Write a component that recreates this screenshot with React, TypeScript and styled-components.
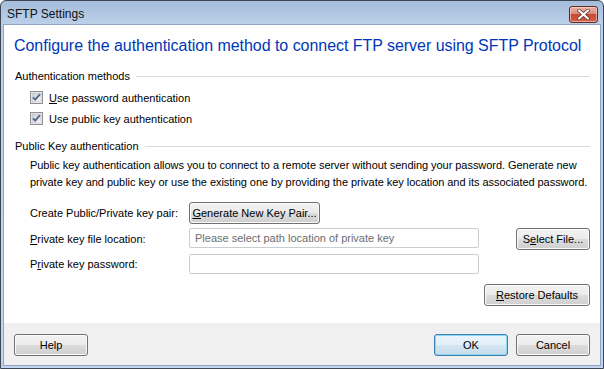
import * as React from "react";
import styled, { createGlobalStyle, css } from "styled-components";

const GlobalStyle = createGlobalStyle`
  html, body {
    margin: 0;
    padding: 0;
    background: #ffffff;
  }
  body {
    font-family: "Liberation Sans", Arial, sans-serif;
    font-size: 11px;
    color: #000000;
  }
`;

const Window = styled.div`
  width: 604px;
  height: 369px;
  box-sizing: border-box;
  display: flex;
  flex-direction: column;
  border: 1px solid #3d4653;
  border-radius: 6px 6px 0 0;
  background: linear-gradient(to bottom, #a4bddb 0px, #bcd0e9 24px, #c4d6ed 100%);
  overflow: hidden;
`;

const TitleBar = styled.div`
  height: 23px;
  flex: 0 0 23px;
  display: flex;
  align-items: center;
  justify-content: space-between;
  padding: 0 5px 0 6px;
`;

const Title = styled.span`
  font-size: 12px;
  color: #111111;
  padding-top: 2px;
`;

const CloseButton = styled.div`
  width: 29px;
  height: 17px;
  box-sizing: border-box;
  margin-top: 4px;
  border: 1px solid #5e2a25;
  border-radius: 3px;
  display: flex;
  align-items: center;
  justify-content: center;
  background: linear-gradient(
    to bottom,
    #eab3a6 0%,
    #db8a7c 45%,
    #c74a33 50%,
    #d0604a 100%
  );
  box-shadow: inset 0 0 0 1px rgba(255, 220, 210, 0.6);
`;

const Client = styled.div`
  flex: 1;
  margin: 0 2px 2px 2px;
  border: 1px solid #8ea5c2;
  background: #ffffff;
  display: flex;
  flex-direction: column;
`;

const Content = styled.div`
  flex: 1;
  padding: 11px 10px 0 10px;
  display: flex;
  flex-direction: column;
`;

const Heading = styled.h1`
  margin: 0;
  font-size: 16px;
  font-weight: normal;
  line-height: 20px;
  letter-spacing: -0.04px;
  color: #0037b8;
  white-space: nowrap;
`;

const GroupHeader = styled.div<{ $top: number }>`
  display: flex;
  align-items: center;
  gap: 6px;
  margin-top: ${(p) => p.$top}px;
  height: 14px;
  padding-left: 1px;
`;

const GroupLabel = styled.span`
  white-space: nowrap;
`;

const Rule = styled.div`
  flex: 1;
  height: 1px;
  background: #d5dbe0;
  margin-top: 1px;
`;

const CheckRow = styled.label`
  display: flex;
  align-items: center;
  gap: 6px;
  height: 21px;
  padding-left: 16px;
`;

const Paragraph = styled.p`
  margin: 4px 0 0 0;
  padding-left: 16px;
  line-height: 17px;
  letter-spacing: -0.045px;
  white-space: nowrap;
`;

const FormGrid = styled.div`
  display: grid;
  grid-template-columns: 159px 290px 1fr;
  grid-template-rows: 22px 22px 20px;
  row-gap: 4px;
  align-items: center;
  margin-top: 11px;
  padding-left: 16px;
`;

const FieldLabel = styled.span`
  white-space: nowrap;
`;

const Input = styled.div<{ $placeholder?: boolean }>`
  height: 20px;
  box-sizing: border-box;
  border: 1px solid #c9ced3;
  border-radius: 2px;
  padding: 0 5px;
  display: flex;
  align-items: center;
  color: ${(p) => (p.$placeholder ? "#6d6d6d" : "#000000")};
  align-self: start;
  white-space: nowrap;
`;

const Button = styled.div<{ $width: number; $default?: boolean }>`
  width: ${(p) => p.$width}px;
  height: 22px;
  box-sizing: border-box;
  border: 1px solid #707070;
  border-radius: 3px;
  display: flex;
  align-items: center;
  justify-content: center;
  white-space: nowrap;
  color: #000000;
  background: linear-gradient(
    to bottom,
    #f2f2f2 0%,
    #ebebeb 50%,
    #dddddd 50%,
    #cfcfcf 100%
  );
  box-shadow: inset 0 0 0 1px #fbfbfb;
  ${(p) =>
    p.$default &&
    css`
      border-color: #3c7fb1;
      box-shadow: inset 0 0 0 1px #8fd5f6;
      background: linear-gradient(
        to bottom,
        #eaf6fd 0%,
        #e3eff7 50%,
        #d3e5f1 50%,
        #c6dbe9 100%
      );
    `}
`;

const SelectCell = styled.div`
  justify-self: end;
  align-self: end;
`;

const ActionRow = styled.div`
  display: flex;
  justify-content: flex-end;
  margin-top: 10px;
`;

const Footer = styled.div`
  height: 42px;
  flex: 0 0 42px;
  background: #f0f0f0;
  display: flex;
  align-items: flex-start;
  padding: 11px 10px 0 10px;
  box-sizing: border-box;
  gap: 8px;
`;

const Spacer = styled.div`
  flex: 1;
`;

const Key = styled.span`
  text-decoration: underline;
  text-underline-offset: 1px;
`;

const CheckBox = () => (
  <svg width="13" height="13" viewBox="0 0 13 13">
    <defs>
      <linearGradient id="cbg" x1="0" y1="0" x2="1" y2="1">
        <stop offset="0" stopColor="#cbcfd5" />
        <stop offset="1" stopColor="#f6f6f6" />
      </linearGradient>
    </defs>
    <rect x="0.5" y="0.5" width="12" height="12" fill="#f4f4f4" stroke="#8f8f8f" />
    <rect x="2" y="2" width="9" height="9" fill="url(#cbg)" stroke="#b7bcc4" strokeWidth="0.6" />
    <path
      d="M3 6.3 L5.2 8.7 L10 3.2"
      fill="none"
      stroke="#4f6592"
      strokeWidth="1.8"
      strokeLinejoin="round"
    />
  </svg>
);

const CloseGlyph = () => (
  <svg width="13" height="11" viewBox="0 0 13 11">
    <path
      d="M2 1.5 L11 9.5 M11 1.5 L2 9.5"
      stroke="#5a2a24"
      strokeWidth="3.6"
      strokeLinecap="round"
    />
    <path
      d="M2 1.5 L11 9.5 M11 1.5 L2 9.5"
      stroke="#ffffff"
      strokeWidth="2.2"
      strokeLinecap="round"
    />
  </svg>
);

const App = () => {
  return (
    <>
      <GlobalStyle />
      <Window>
        <TitleBar>
          <Title>SFTP Settings</Title>
          <CloseButton>
            <CloseGlyph />
          </CloseButton>
        </TitleBar>
        <Client>
          <Content>
            <Heading>
              Configure the authentication method to connect FTP server using SFTP Protocol
            </Heading>

            <GroupHeader $top={13}>
              <GroupLabel>Authentication methods</GroupLabel>
              <Rule />
            </GroupHeader>
            <CheckRow style={{ marginTop: 4 }}>
              <CheckBox />
              <span>
                <Key>U</Key>se password authentication
              </span>
            </CheckRow>
            <CheckRow>
              <CheckBox />
              <span>Use public key authentication</span>
            </CheckRow>

            <GroupHeader $top={10}>
              <GroupLabel>Public Key authentication</GroupLabel>
              <Rule />
            </GroupHeader>
            <Paragraph>
              Public key authentication allows you to connect to a remote server without sending
              your password. Generate new
              <br />
              private key and public key or use the existing one by providing the private key
              location and its associated password.
            </Paragraph>

            <FormGrid>
              <FieldLabel>Create Public/Private key pair:</FieldLabel>
              <Button $width={131}>
                <span>
                  <Key>G</Key>enerate New Key Pair...
                </span>
              </Button>
              <div />

              <FieldLabel>
                <Key>P</Key>rivate key file location:
              </FieldLabel>
              <Input $placeholder>Please select path location of private key</Input>
              <SelectCell>
                <Button $width={74}>
                  <span>
                    S<Key>e</Key>lect File...
                  </span>
                </Button>
              </SelectCell>

              <FieldLabel>
                P<Key>r</Key>ivate key password:
              </FieldLabel>
              <Input />
              <div />
            </FormGrid>

            <ActionRow>
              <Button $width={106}>
                <span>
                  <Key>R</Key>estore Defaults
                </span>
              </Button>
            </ActionRow>
          </Content>
          <Footer>
            <Button $width={74}>Help</Button>
            <Spacer />
            <Button $width={74} $default>
              OK
            </Button>
            <Button $width={74}>Cancel</Button>
          </Footer>
        </Client>
      </Window>
    </>
  );
};

export default App;
